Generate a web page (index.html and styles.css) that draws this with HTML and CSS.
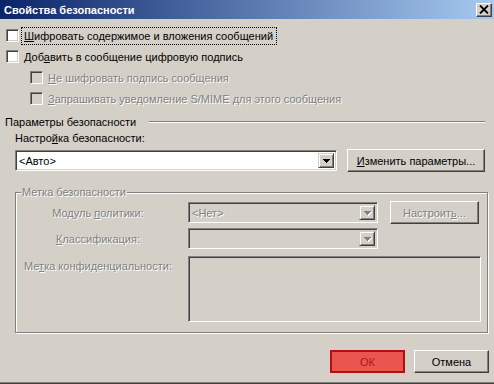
FILE: index.html
```html
<!DOCTYPE html>
<html lang="ru">
<head>
  <meta charset="UTF-8">
  <title>Свойства безопасности</title>
  <link rel="stylesheet" href="styles.css">
</head>
<body>
  <div class="window">
    <div class="titlebar">
      <span class="title">Свойства безопасности</span>
      <span class="close-btn">
        <svg width="10" height="9" viewBox="0 0 10 9"><path d="M1 0.5l8 8M9 0.5l-8 8" stroke="#000" stroke-width="1.8" fill="none"/></svg>
      </span>
    </div>
    <div class="content">
      <label class="check-row">
        <span class="checkbox"></span>
        <span class="check-text focused"><u>Ш</u>ифровать содержимое и вложения сообщений</span>
      </label>
      <label class="check-row">
        <span class="checkbox"></span>
        <span class="check-text">Доб<u>а</u>вить в сообщение цифровую подпись</span>
      </label>
      <label class="check-row sub disabled">
        <span class="checkbox"></span>
        <span class="check-text"><u>Н</u>е шифровать подпись сообщения</span>
      </label>
      <label class="check-row sub disabled">
        <span class="checkbox"></span>
        <span class="check-text"><u>З</u>апрашивать уведомление S/MIME для этого сообщения</span>
      </label>

      <div class="section-head">
        <span>Параметры безопасности</span>
        <span class="etched-line"></span>
      </div>
      <div class="field-label">Настро<u>й</u>ка безопасности:</div>
      <div class="setting-row">
        <div class="combo combo-wide">
          <span class="combo-text">&lt;Авто&gt;</span>
          <span class="drop-btn"><svg width="7" height="4" viewBox="0 0 7 4"><rect x="0" y="0" width="7" height="1"/><rect x="1" y="1" width="5" height="1"/><rect x="2" y="2" width="3" height="1"/><rect x="3" y="3" width="1" height="1"/></svg></span>
        </div>
        <div class="btn btn-change"><u>И</u>зменить параметры...</div>
      </div>

      <fieldset class="group">
        <legend class="disabled-text">Метка безопасности</legend>
        <div class="group-grid">
          <div class="grid-label row-1 disabled-text">Модуль <u>п</u>олитики:</div>
          <div class="combo combo-small row-1 disabled">
            <span class="combo-text disabled-text">&lt;Нет&gt;</span>
            <span class="drop-btn"><svg width="7" height="4" viewBox="0 0 7 4"><rect x="0" y="0" width="7" height="1"/><rect x="1" y="1" width="5" height="1"/><rect x="2" y="2" width="3" height="1"/><rect x="3" y="3" width="1" height="1"/></svg></span>
          </div>
          <div class="btn btn-setup row-1 disabled-text">Настроит<u>ь</u>...</div>

          <div class="grid-label row-2 disabled-text"><u>К</u>лассификация:</div>
          <div class="combo combo-small row-2 disabled">
            <span class="combo-text"></span>
            <span class="drop-btn"><svg width="7" height="4" viewBox="0 0 7 4"><rect x="0" y="0" width="7" height="1"/><rect x="1" y="1" width="5" height="1"/><rect x="2" y="2" width="3" height="1"/><rect x="3" y="3" width="1" height="1"/></svg></span>
          </div>

          <div class="grid-label row-3 label-top disabled-text">Ме<u>т</u>ка конфиденциальности:</div>
          <div class="text-area row-3"></div>
        </div>
      </fieldset>

      <div class="footer">
        <div class="btn btn-ok">ОК</div>
        <div class="btn btn-cancel">Отмена</div>
      </div>
    </div>
  </div>
</body>
</html>
```

FILE: styles.css
```css
body {
  margin: 0;
  font-family: "Liberation Sans", Tahoma, sans-serif;
  font-size: 11px;
  color: #000;
}
.window {
  width: 494px;
  height: 384px;
  box-sizing: border-box;
  background-color: #d4d0c8;
  border-bottom: 1px solid #404040;
  box-shadow: inset 0 -1px 0 #808080;
  display: flex;
  flex-direction: column;
}
.titlebar {
  height: 19px;
  flex-shrink: 0;
  display: flex;
  align-items: center;
  justify-content: space-between;
  padding: 0 2px 0 4px;
  background: linear-gradient(to right, #0a246a, #a6caf0);
  color: #fff;
  font-weight: bold;
}
.title {
  font-size: 11px;
}
.close-btn {
  width: 16px;
  height: 14px;
  box-sizing: border-box;
  display: flex;
  align-items: center;
  justify-content: center;
  background-color: #d4d0c8;
  border: 1px solid;
  border-color: #fff #404040 #404040 #fff;
  box-shadow: inset -1px -1px 0 #808080;
}
.content {
  padding-top: 6px;
  display: flex;
  flex-direction: column;
}

/* checkboxes */
.check-row {
  height: 21px;
  display: flex;
  align-items: center;
  gap: 5px;
  padding-left: 6px;
}
.check-row.sub {
  padding-left: 30px;
}
.checkbox {
  width: 13px;
  height: 13px;
  box-sizing: border-box;
  background-color: #fff;
  border: 1px solid;
  border-color: #808080 #fff #fff #808080;
  box-shadow: inset 1px 1px 0 #404040, inset -1px -1px 0 #d4d0c8;
}
.check-row.disabled .checkbox {
  background-color: #d4d0c8;
}
.check-text.focused {
  outline: 1px dotted #000;
  outline-offset: 2px;
  padding: 0 1px 0 0;
}
.disabled .check-text, .disabled-text {
  color: #808080;
  text-shadow: 1px 1px 0 #fff;
}

/* security settings */
.section-head {
  margin-top: 6px;
  height: 14px;
  display: flex;
  align-items: center;
  padding-left: 5px;
  padding-right: 9px;
}
.etched-line {
  flex: 1;
  margin-left: 13px;
  height: 1px;
  background-color: #808080;
  border-bottom: 1px solid #fff;
}
.field-label {
  margin-top: 3px;
  height: 14px;
  padding-left: 15px;
}
.setting-row {
  margin-top: 3px;
  display: flex;
  align-items: center;
  padding-left: 15px;
}
.combo {
  height: 21px;
  box-sizing: border-box;
  display: flex;
  align-items: center;
  background-color: #fff;
  border: 1px solid;
  border-color: #808080 #fff #fff #808080;
  box-shadow: inset 1px 1px 0 #404040, inset -1px -1px 0 #d4d0c8;
  padding: 2px;
}
.combo.disabled {
  background-color: #d4d0c8;
}
.combo-wide {
  width: 322px;
}
.combo-small {
  width: 190px;
}
.combo-text {
  flex: 1;
  padding-left: 1px;
}
.drop-btn {
  width: 16px;
  height: 15px;
  box-sizing: border-box;
  display: flex;
  align-items: center;
  justify-content: center;
  background-color: #d4d0c8;
  border: 1px solid;
  border-color: #d4d0c8 #404040 #404040 #d4d0c8;
  box-shadow: inset 1px 1px 0 #fff, inset -1px -1px 0 #808080;
}
.combo.disabled .drop-btn svg {
  fill: #808080;
  filter: drop-shadow(1px 1px 0 #fff);
}
.btn {
  height: 23px;
  box-sizing: border-box;
  display: flex;
  align-items: center;
  justify-content: center;
  background-color: #d4d0c8;
  border: 1px solid;
  border-color: #fff #404040 #404040 #fff;
  box-shadow: inset -1px -1px 0 #808080;
}
.btn-change {
  width: 138px;
  margin-left: 10px;
}

/* security label group */
.group {
  margin: 14px 6px 0 15px;
  padding: 0 0 10px 0;
  border: 1px solid #808080;
  box-shadow: 1px 1px 0 #fff, inset 1px 1px 0 #fff;
}
.group legend {
  margin-left: 5px;
  padding: 0 1px;
  background-color: #d4d0c8;
  line-height: 13px;
}
.group-grid {
  margin-top: 2px;
  display: grid;
  grid-template-columns: 164px 190px 1fr;
  column-gap: 8px;
  align-items: center;
}
.grid-label {
  grid-column: 1;
  text-align: center;
}
.row-1 {
  grid-row: 1;
}
.row-2 {
  grid-row: 2;
  margin-top: 4px;
}
.row-3 {
  grid-row: 3;
  margin-top: 7px;
}
.label-top {
  align-self: start;
  padding-top: 4px;
}
.btn-setup {
  grid-column: 3;
  width: 89px;
  margin-left: 4px;
}
.text-area {
  grid-column: 2 / 4;
  width: 293px;
  height: 66px;
  box-sizing: border-box;
  border: 1px solid;
  border-color: #808080 #fff #fff #808080;
  box-shadow: inset 1px 1px 0 #404040, inset -1px -1px 0 #d4d0c8;
}

/* dialog buttons */
.footer {
  margin-top: 17px;
  display: flex;
  justify-content: flex-end;
  gap: 9px;
  padding-right: 5px;
}
.btn-ok, .btn-cancel {
  width: 75px;
}
.btn-ok {
  background-color: #ea5550;
  color: #b01818;
  border: 2px solid #b01010;
  box-shadow: none;
}
```
